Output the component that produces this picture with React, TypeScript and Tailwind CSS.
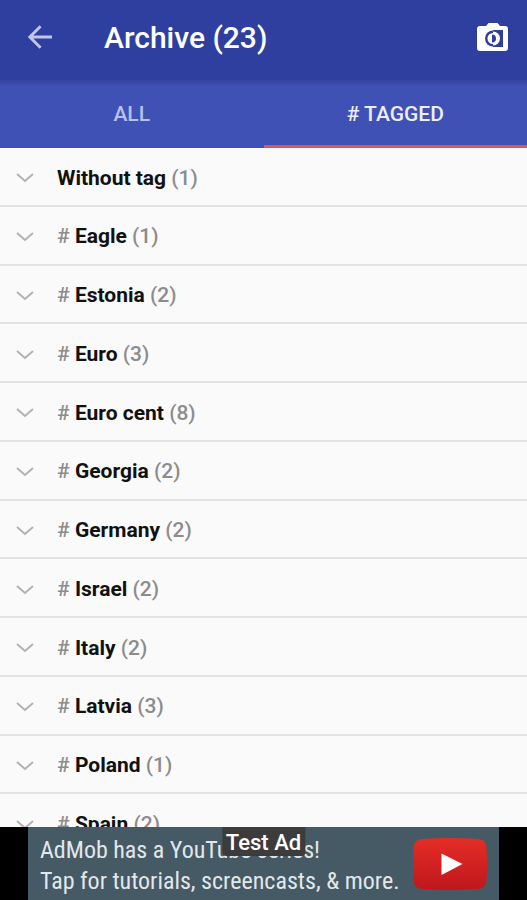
import { useState } from 'react';

const tags = [
    { name: 'Without tag', count: 1, plain: true },
    { name: 'Eagle', count: 1 },
    { name: 'Estonia', count: 2 },
    { name: 'Euro', count: 3 },
    { name: 'Euro cent', count: 8 },
    { name: 'Georgia', count: 2 },
    { name: 'Germany', count: 2 },
    { name: 'Israel', count: 2 },
    { name: 'Italy', count: 2 },
    { name: 'Latvia', count: 3 },
    { name: 'Poland', count: 1 },
    { name: 'Spain', count: 2 },
];

function BackIcon() {
    return (
        <svg viewBox="0 0 24 24" className="w-6 h-6" fill="none" stroke="#c3c5e8" strokeWidth="2.9">
            <path d="M24 12H2M12.6 1.2 1.8 12l10.8 10.8" />
        </svg>
    );
}

function CameraIcon() {
    return (
        <svg viewBox="0 0 32 28" className="w-8 h-7">
            <path
                fill="#fff"
                d="M11.500 0h9l2.500 3H28a3 3 0 0 1 3 3v19a3 3 0 0 1-3 3H3a3 3 0 0 1-3-3V6a3 3 0 0 1 3-3h6z"
            />
            {/* left half: blue ring on white, right half: the same inverted */}
            <path fill="#2f3f9f" d="M16 7h10v17H16z" />
            <path fill="#2f3f9f" d="M16 7.500a8 8 0 0 0 0 16z" />
            <path fill="#fff" d="M16 10a5.500 5.500 0 0 0 0 11z" />
            <path fill="#fff" d="M16 8.500a7 7 0 0 1 0 14z" />
            <path fill="#2f3f9f" d="M15 11.500a4 4 0 0 1 0 8z" />
        </svg>
    );
}

function Chevron() {
    return (
        <svg viewBox="0 0 18 10" className="w-[18px] h-[10px] shrink-0" fill="none" stroke="#b2b2b2" strokeWidth="2">
            <path d="m1 1 8 7 8-7" />
        </svg>
    );
}

function PlayLogo() {
    return (
        <svg viewBox="0 0 74 52" className="w-[74px] h-[52px] shrink-0">
            <defs>
                <linearGradient id="play" x1="0" y1="0" x2="0" y2="1">
                    <stop offset="0" stopColor="#e52d27" />
                    <stop offset="1" stopColor="#bf171d" />
                </linearGradient>
            </defs>
            <path
                fill="url(#play)"
                d="M10 1Q37-.8 64 1c7 .5 9 3 9.500 9q1 16 0 32c-.5 6-2.500 8.500-9.500 9q-27 1.800-54 0c-7-.5-9-3-9.500-9q-1-16 0-32C1 4 3 1.500 10 1z"
            />
            <path fill="#fff" d="m28.500 15.500 21 10.500-21 11z" />
        </svg>
    );
}

export default function App() {
    const [tab, setTab] = useState('tagged');

    const tabClass = (active: boolean) =>
        `flex-1 pt-1 border-b-[3px] text-[21px] font-medium ${active ? 'border-[#e0555c] text-[#eceefb]' : 'border-transparent text-[#b9c0ec]'}`;

    return (
        <div className="h-screen flex flex-col overflow-hidden bg-[#fafafa] font-['Roboto',sans-serif]">
            <header className="h-20 shrink-0 flex items-center pl-7 pr-[18px] pb-1.5 bg-[#2f3f9f]">
                <button aria-label="Back"><BackIcon /></button>
                <h1 className="flex-1 pt-0.5 pl-[52px] text-[30px] leading-9 font-medium text-white">Archive (23)</h1>
                <button aria-label="Compare photos"><CameraIcon /></button>
            </header>

            <nav className="h-[68px] shrink-0 flex bg-[#3f51b5] bg-linear-to-b from-[#35449f] to-[#3f51b5] to-10%">
                <button className={tabClass(tab === 'all')} onClick={() => setTab('all')}>ALL</button>
                <button className={tabClass(tab === 'tagged')} onClick={() => setTab('tagged')}># TAGGED</button>
            </nav>

            <main className="flex-1 min-h-0 overflow-hidden">
                <ul className="h-[705px] grid auto-rows-fr">
                    {tags.map((tag) => (
                        <li key={tag.name} className="border-b-2 border-[#e2e2e2]">
                            <button className="w-full h-full flex items-center gap-[23px] pl-4 pt-1 text-left text-[21px]">
                                <Chevron />
                                <span className="font-medium text-[#8c8c8c]">
                                    {!tag.plain && '# '}
                                    <strong className="font-bold text-[#111]">{tag.name}</strong> ({tag.count})
                                </span>
                            </button>
                        </li>
                    ))}
                </ul>
            </main>

            <footer className="h-[73px] shrink-0 flex justify-center overflow-hidden bg-black px-7">
                <a
                    href="#ad"
                    className="relative flex-1 flex items-center justify-between pl-3 pr-3 bg-[#455a64] text-[#e3e7ea] font-['Roboto_Condensed','Liberation_Sans_Narrow',sans-serif]"
                >
                    <p className="pt-1 text-2xl leading-[31px] whitespace-nowrap">
                        AdMob has a YouTube series!
                        <br />
                        Tap for tutorials, screencasts, &amp; more.
                    </p>
                    <PlayLogo />
                    <span className="absolute top-0 left-1/2 -translate-x-1/2 px-1 h-[29px] rounded-b bg-[#3c3c3c] text-[22px] leading-8 font-medium whitespace-nowrap text-white font-['Roboto',sans-serif]">
                        Test Ad
                    </span>
                </a>
            </footer>
        </div>
    );
}
